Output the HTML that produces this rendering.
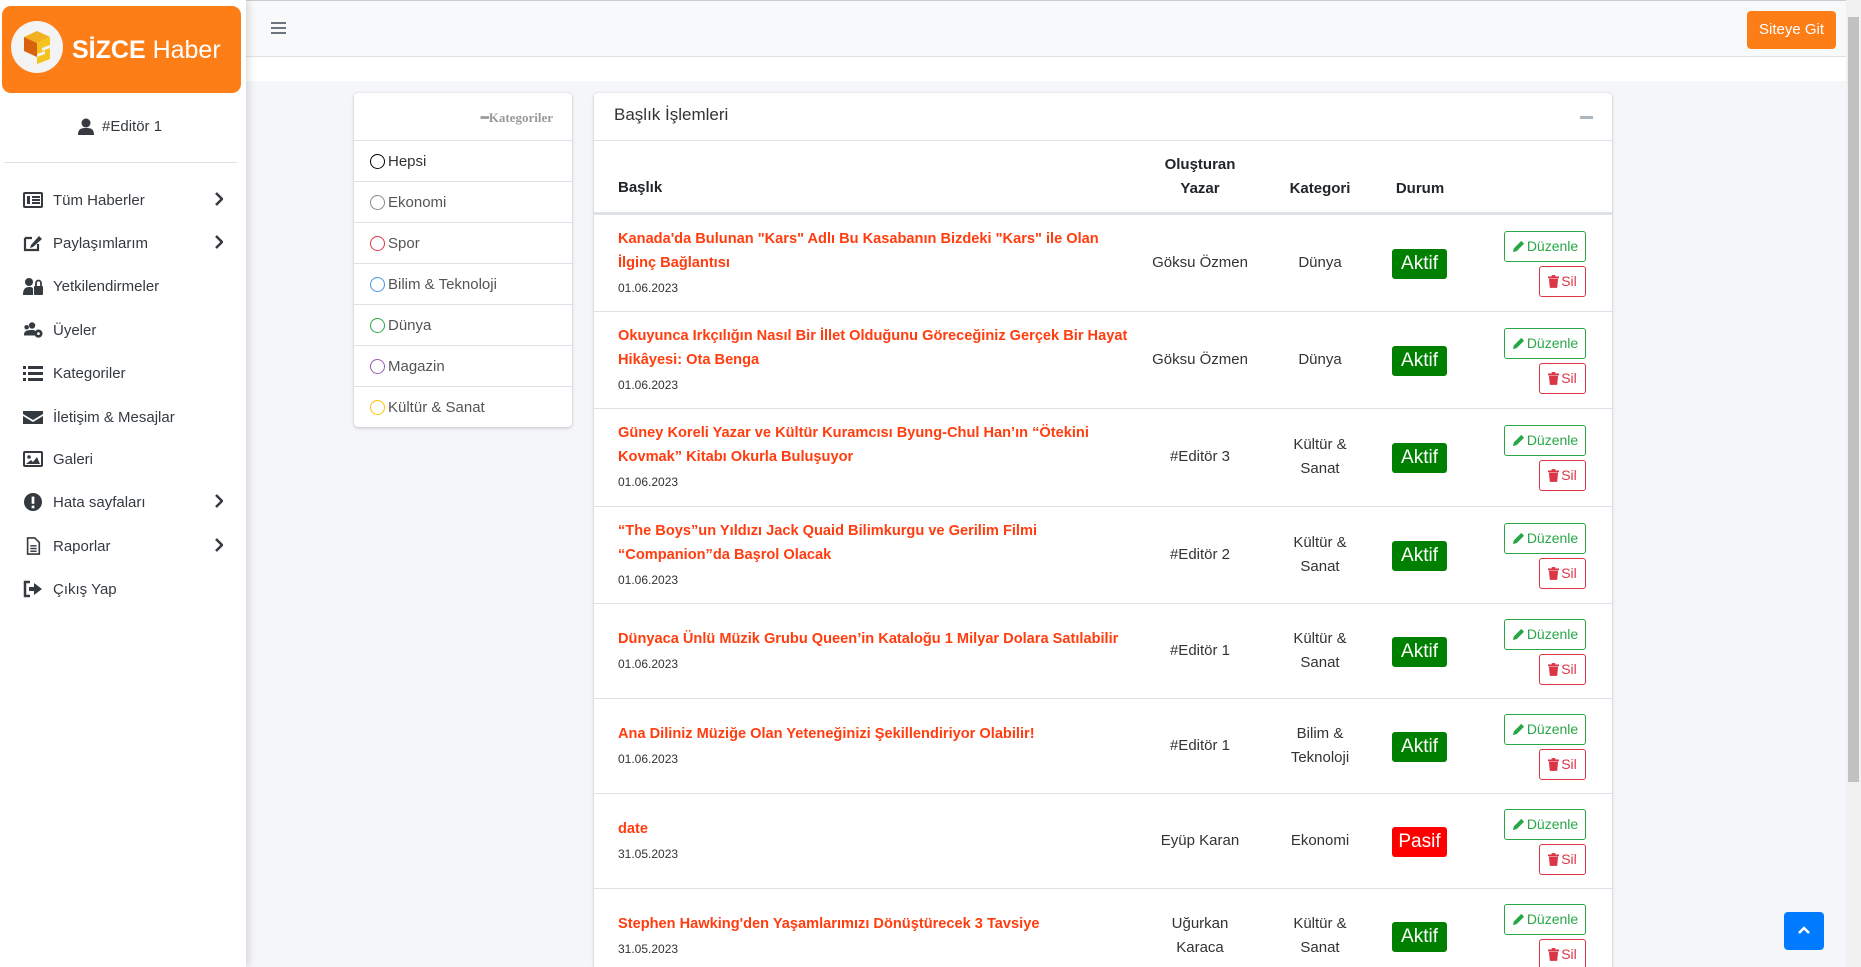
<!DOCTYPE html>
<html style="overflow:hidden;height:967px"><head><meta charset="utf-8"><style>
*{box-sizing:border-box;margin:0;padding:0}
html,body{width:1861px;height:967px;overflow:hidden}
body{background:#f4f6f9;font-family:"Liberation Sans",sans-serif;color:#212529;position:relative}
.abs{position:absolute}
#side{left:0;top:0;width:246px;height:967px;background:#fff;box-shadow:2px 0 8px rgba(0,0,0,.15);z-index:3}
#logo{left:2px;top:6px;width:239px;height:87px;background:#fd7e17;border-radius:9px}
.nav{left:23px;width:210px;height:30px;display:flex;align-items:center;font-size:15px;color:#343a40}
.nav svg{width:20px;height:18px;margin-right:10px;fill:#343a40}
.nav .chev{position:absolute;right:0;top:7px;width:8px;height:14px}
#top{left:246px;top:0;width:1600px;height:57px;background:#f8f9fa;border-bottom:1px solid #dee2e6;border-top:1px solid #ccc}
#strip{left:246px;top:57px;width:1600px;height:24px;background:#fff}
.card{background:#fff;border-radius:4px;box-shadow:0 0 1px rgba(0,0,0,.13),0 1px 3px rgba(0,0,0,.2)}
.cat{height:41px;border-top:1px solid #dee2e6;display:flex;align-items:center;padding-left:16px;font-size:15px;color:#555}
.cat i{width:15px;height:15px;border-radius:50%;border:1.6px solid;margin-right:3px;display:inline-block}
.row{position:absolute;left:0;width:1018px;border-top:1px solid #dee2e6}
.t{position:absolute;left:24px;color:#ff3d0f;font-weight:bold;font-size:14.6px;line-height:24px;white-space:nowrap}
.d{font-size:12px;color:#333;font-weight:normal;line-height:26px}
.c{position:absolute;text-align:center;font-size:15px;line-height:24px;color:#333}
.badge{position:absolute;left:798px;width:55px;height:30px;border-radius:3px;color:#fff;font-size:19px;text-align:center;line-height:30px}
.ed{position:absolute;left:910px;width:82px;height:31px;border:1px solid #28a745;border-radius:3px;color:#28a745;font-size:14px;line-height:29px;text-align:center}
.sl{position:absolute;left:945px;width:47px;height:31px;border:1px solid #dc3545;border-radius:3px;color:#dc3545;font-size:14px;line-height:29px;text-align:center}
.ed svg,.sl svg{vertical-align:-2px;margin-right:2px}
</style></head><body>
<svg width="0" height="0" style="position:absolute"><defs>
<symbol id="pen" viewBox="0 0 14 14"><path d="M1 13 L2 9 L10 1 L13 4 L5 12Z" fill="#28a745"/></symbol>
<symbol id="trash" viewBox="0 0 12 14"><rect x="0" y="1.5" width="12" height="2" fill="#dc3545"/><rect x="4" y="0" width="4" height="2" fill="#dc3545"/><path d="M1 4 H11 L10 14 H2Z" fill="#dc3545"/></symbol>
</defs></svg>
<div id="side" class="abs">
 <div id="logo" class="abs">
  <div class="abs" style="left:9px;top:15px;width:52px;height:52px;border-radius:50%;background:#f3f3f3"></div>
  <svg class="abs" style="left:18px;top:23px" width="34" height="36" viewBox="0 0 34 36"><path d="M4 8 L17 2 L30 8 L17 14Z" fill="#f2b01e"/><path d="M4 8 L17 14 L17 28 L4 22Z" fill="#d9620e"/><path d="M17 14 L30 8 L30 16 L22 19 L22 22 L30 19 L30 30 L17 35 L17 28 L25 25 L25 22 L17 25Z" fill="#f6c21c"/></svg>
  <div class="abs" style="left:70px;top:30px;color:#fff;font-size:25px;white-space:nowrap"><b>SİZCE</b> Haber</div>
 </div>
 <div class="abs" style="left:78px;top:118px;font-size:15px;color:#343a40;display:flex;align-items:center"><svg width="16" height="17" viewBox="0 0 16 17" style="margin-right:8px"><circle cx="8" cy="5" r="4.5" fill="#343a40"/><path d="M0 17 C0 11 3 10 8 10 C13 10 16 11 16 17Z" fill="#343a40"/></svg>#Editör 1</div>
 <div class="abs" style="left:4px;top:162px;width:233px;height:1px;background:#dee2e6"></div>
 <div class="abs nav" style="top:185px"><svg viewBox="0 0 20 16"><rect x="1" y="1" width="18" height="14" rx="1" fill="none" stroke="#343a40" stroke-width="2"/><rect x="4" y="4" width="3" height="8"/><rect x="9" y="4" width="8" height="2"/><rect x="9" y="7" width="8" height="2"/><rect x="9" y="10" width="8" height="2"/></svg>Tüm Haberler<svg class="chev" viewBox="0 0 8 14"><path d="M1 1 L7 7 L1 13" stroke="#343a40" stroke-width="2.5" fill="none"/></svg></div>
 <div class="abs nav" style="top:228px"><svg viewBox="0 0 20 18"><path d="M2 4 H9 M2 4 V16 H15 V10" stroke="#343a40" stroke-width="2.2" fill="none"/><path d="M8 11 L16 2 L19 5 L10 13 L7 14Z"/></svg>Paylaşımlarım<svg class="chev" viewBox="0 0 8 14"><path d="M1 1 L7 7 L1 13" stroke="#343a40" stroke-width="2.5" fill="none"/></svg></div>
 <div class="abs nav" style="top:271px"><svg viewBox="0 0 20 18"><circle cx="6" cy="5" r="4"/><path d="M0 18 C0 11 3 10 7 10 C9 10 10 11 10 12 V18Z"/><rect x="11" y="9" width="9" height="9" rx="1"/><path d="M13 9 V6 A2.5 2.5 0 0 1 18 6 V9" stroke="#343a40" stroke-width="1.8" fill="none"/></svg>Yetkilendirmeler</div>
 <div class="abs nav" style="top:315px"><svg viewBox="0 0 22 18"><circle cx="4" cy="6" r="2.5"/><circle cx="10" cy="4" r="3.5"/><path d="M1 15 C1 10 4 9 10 9 C13 9 14 10 14 12 V15Z"/><circle cx="17" cy="13" r="4.5"/><circle cx="17" cy="13" r="1.5" fill="#fff"/></svg>Üyeler</div>
 <div class="abs nav" style="top:358px"><svg viewBox="0 0 20 16"><rect x="0" y="1" width="3" height="3"/><rect x="0" y="7" width="3" height="3"/><rect x="0" y="13" width="3" height="3"/><rect x="5" y="1" width="15" height="3"/><rect x="5" y="7" width="15" height="3"/><rect x="5" y="13" width="15" height="3"/></svg>Kategoriler</div>
 <div class="abs nav" style="top:402px"><svg viewBox="0 0 20 16"><path d="M0 2 H20 V5 L10 11 L0 5Z"/><path d="M0 7 L10 13 L20 7 V15 H0Z"/></svg>İletişim &amp; Mesajlar</div>
 <div class="abs nav" style="top:444px"><svg viewBox="0 0 20 16"><rect x="1" y="1" width="18" height="14" rx="1" fill="none" stroke="#343a40" stroke-width="2"/><circle cx="6" cy="6" r="1.8"/><path d="M3 13 L8 9 L10 11 L14 6 L17 13Z"/></svg>Galeri</div>
 <div class="abs nav" style="top:487px"><svg viewBox="0 0 20 20"><circle cx="10" cy="10" r="10"/><rect x="8.5" y="4" width="3" height="8" fill="#fff"/><rect x="8.5" y="14" width="3" height="3" fill="#fff"/></svg>Hata sayfaları<svg class="chev" viewBox="0 0 8 14"><path d="M1 1 L7 7 L1 13" stroke="#343a40" stroke-width="2.5" fill="none"/></svg></div>
 <div class="abs nav" style="top:531px"><svg viewBox="0 0 20 20"><path d="M4 1 H12 L17 6 V19 H4Z" fill="none" stroke="#343a40" stroke-width="1.8"/><rect x="7" y="9" width="7" height="1.6"/><rect x="7" y="12" width="7" height="1.6"/><rect x="7" y="15" width="7" height="1.6"/></svg>Raporlar<svg class="chev" viewBox="0 0 8 14"><path d="M1 1 L7 7 L1 13" stroke="#343a40" stroke-width="2.5" fill="none"/></svg></div>
 <div class="abs nav" style="top:574px"><svg viewBox="0 0 20 18"><path d="M7 2 H2 V16 H7" stroke="#343a40" stroke-width="2.5" fill="none"/><path d="M6 7 H11 V3 L19 9 L11 15 V11 H6Z"/></svg>Çıkış Yap</div>
</div>
<div id="top" class="abs">
 <div class="abs" style="left:25px;top:21px;width:15px;height:2px;background:#6c757d;box-shadow:0 5px 0 #6c757d,0 10px 0 #6c757d"></div>
 <div class="abs" style="left:1501px;top:10px;width:89px;height:38px;background:#fd7e17;border-radius:4px;color:#fff;font-size:15px;text-align:center;line-height:38px">Siteye Git</div>
</div>
<div id="strip" class="abs"></div>
<div class="abs" style="left:1846px;top:0;width:15px;height:967px;background:#f1f1f1"><div class="abs" style="left:2px;top:17px;width:11px;height:765px;background:#c1c1c1"></div></div>

<div class="abs card" style="left:354px;top:93px;width:218px;height:334px">
 <div style="height:47px;text-align:right;padding:17px 19px 0 0;font-family:'Liberation Serif',serif;font-weight:bold;font-size:13px;color:#999">━Kategoriler</div>
 <div class="cat" style="color:#333"><i style="border-color:#000"></i>Hepsi</div>
 <div class="cat"><i style="border-color:#888"></i>Ekonomi</div>
 <div class="cat"><i style="border-color:#dc3545"></i>Spor</div>
 <div class="cat"><i style="border-color:#4a90e2"></i>Bilim &amp; Teknoloji</div>
 <div class="cat"><i style="border-color:#28a745"></i>Dünya</div>
 <div class="cat"><i style="border-color:#9b59b6"></i>Magazin</div>
 <div class="cat"><i style="border-color:#ffc107"></i>Kültür &amp; Sanat</div>
</div>

<div class="abs card" style="left:594px;top:93px;width:1018px;height:874px;overflow:hidden;border-radius:4px 4px 0 0">
 <div class="abs" style="left:20px;top:12px;font-size:17px;color:#333">Başlık İşlemleri</div>
 <div class="abs" style="left:986px;top:23px;width:13px;height:3px;background:#adb5bd"></div>
 <div class="row" style="top:47px;height:74px;border-bottom:2px solid #dee2e6;font-weight:bold;font-size:15px">
  <div class="abs" style="left:24px;top:38px">Başlık</div>
  <div class="c" style="left:546px;width:120px;top:12px;font-weight:bold;color:#212529">Oluşturan<br>Yazar</div>
  <div class="c" style="left:686px;width:80px;top:36px;font-weight:bold;color:#212529">Kategori</div>
  <div class="c" style="left:786px;width:80px;top:36px;font-weight:bold;color:#212529">Durum</div>
 </div>
 <div class="row" style="top:121px;height:97px">
  <div class="t" style="top:12px">Kanada'da Bulunan "Kars" Adlı Bu Kasabanın Bizdeki "Kars" ile Olan<br>İlginç Bağlantısı<br><span class="d">01.06.2023</span></div>
  <div class="c" style="left:546px;width:120px;top:36px">Göksu Özmen</div><div class="c" style="left:676px;width:100px;top:36px">Dünya</div>
  <div class="badge" style="top:34px;background:#008000">Aktif</div><div class="ed" style="top:16px"><svg width="13" height="13"><use href="#pen"/></svg>Düzenle</div><div class="sl" style="top:51px"><svg width="11" height="13"><use href="#trash"/></svg>Sil</div>
 </div>
 <div class="row" style="top:218px;height:97px">
  <div class="t" style="top:12px">Okuyunca Irkçılığın Nasıl Bir İllet Olduğunu Göreceğiniz Gerçek Bir Hayat<br>Hikâyesi: Ota Benga<br><span class="d">01.06.2023</span></div>
  <div class="c" style="left:546px;width:120px;top:36px">Göksu Özmen</div><div class="c" style="left:676px;width:100px;top:36px">Dünya</div>
  <div class="badge" style="top:34px;background:#008000">Aktif</div><div class="ed" style="top:16px"><svg width="13" height="13"><use href="#pen"/></svg>Düzenle</div><div class="sl" style="top:51px"><svg width="11" height="13"><use href="#trash"/></svg>Sil</div>
 </div>
 <div class="row" style="top:315px;height:98px">
  <div class="t" style="top:12px">Güney Koreli Yazar ve Kültür Kuramcısı Byung-Chul Han’ın “Ötekini<br>Kovmak” Kitabı Okurla Buluşuyor<br><span class="d">01.06.2023</span></div>
  <div class="c" style="left:546px;width:120px;top:36px">#Editör 3</div><div class="c" style="left:676px;width:100px;top:24px">Kültür &amp;<br>Sanat</div>
  <div class="badge" style="top:34px;background:#008000">Aktif</div><div class="ed" style="top:16px"><svg width="13" height="13"><use href="#pen"/></svg>Düzenle</div><div class="sl" style="top:51px"><svg width="11" height="13"><use href="#trash"/></svg>Sil</div>
 </div>
 <div class="row" style="top:413px;height:97px">
  <div class="t" style="top:12px">“The Boys”un Yıldızı Jack Quaid Bilimkurgu ve Gerilim Filmi<br>“Companion”da Başrol Olacak<br><span class="d">01.06.2023</span></div>
  <div class="c" style="left:546px;width:120px;top:36px">#Editör 2</div><div class="c" style="left:676px;width:100px;top:24px">Kültür &amp;<br>Sanat</div>
  <div class="badge" style="top:34px;background:#008000">Aktif</div><div class="ed" style="top:16px"><svg width="13" height="13"><use href="#pen"/></svg>Düzenle</div><div class="sl" style="top:51px"><svg width="11" height="13"><use href="#trash"/></svg>Sil</div>
 </div>
 <div class="row" style="top:510px;height:95px">
  <div class="t" style="top:23px">Dünyaca Ünlü Müzik Grubu Queen’in Kataloğu 1 Milyar Dolara Satılabilir<br><span class="d">01.06.2023</span></div>
  <div class="c" style="left:546px;width:120px;top:35px">#Editör 1</div><div class="c" style="left:676px;width:100px;top:23px">Kültür &amp;<br>Sanat</div>
  <div class="badge" style="top:33px;background:#008000">Aktif</div><div class="ed" style="top:15px"><svg width="13" height="13"><use href="#pen"/></svg>Düzenle</div><div class="sl" style="top:50px"><svg width="11" height="13"><use href="#trash"/></svg>Sil</div>
 </div>
 <div class="row" style="top:605px;height:95px">
  <div class="t" style="top:23px">Ana Diliniz Müziğe Olan Yeteneğinizi Şekillendiriyor Olabilir!<br><span class="d">01.06.2023</span></div>
  <div class="c" style="left:546px;width:120px;top:35px">#Editör 1</div><div class="c" style="left:676px;width:100px;top:23px">Bilim &amp;<br>Teknoloji</div>
  <div class="badge" style="top:33px;background:#008000">Aktif</div><div class="ed" style="top:15px"><svg width="13" height="13"><use href="#pen"/></svg>Düzenle</div><div class="sl" style="top:50px"><svg width="11" height="13"><use href="#trash"/></svg>Sil</div>
 </div>
 <div class="row" style="top:700px;height:95px">
  <div class="t" style="top:23px">date<br><span class="d">31.05.2023</span></div>
  <div class="c" style="left:546px;width:120px;top:35px">Eyüp Karan</div><div class="c" style="left:676px;width:100px;top:35px">Ekonomi</div>
  <div class="badge" style="top:33px;background:#ff0000">Pasif</div><div class="ed" style="top:15px"><svg width="13" height="13"><use href="#pen"/></svg>Düzenle</div><div class="sl" style="top:50px"><svg width="11" height="13"><use href="#trash"/></svg>Sil</div>
 </div>
 <div class="row" style="top:795px;height:95px">
  <div class="t" style="top:23px">Stephen Hawking'den Yaşamlarımızı Dönüştürecek 3 Tavsiye<br><span class="d">31.05.2023</span></div>
  <div class="c" style="left:546px;width:120px;top:23px">Uğurkan<br>Karaca</div><div class="c" style="left:676px;width:100px;top:23px">Kültür &amp;<br>Sanat</div>
  <div class="badge" style="top:33px;background:#008000">Aktif</div><div class="ed" style="top:15px"><svg width="13" height="13"><use href="#pen"/></svg>Düzenle</div><div class="sl" style="top:50px"><svg width="11" height="13"><use href="#trash"/></svg>Sil</div>
 </div>
</div>
<div class="abs" style="left:1784px;top:912px;width:40px;height:38px;background:#007bff;border-radius:4px"><svg class="abs" style="left:13px;top:13px" width="14" height="10" viewBox="0 0 14 10"><path d="M2 8 L7 3 L12 8" stroke="#fff" stroke-width="2.5" fill="none"/></svg></div>
</body></html>
